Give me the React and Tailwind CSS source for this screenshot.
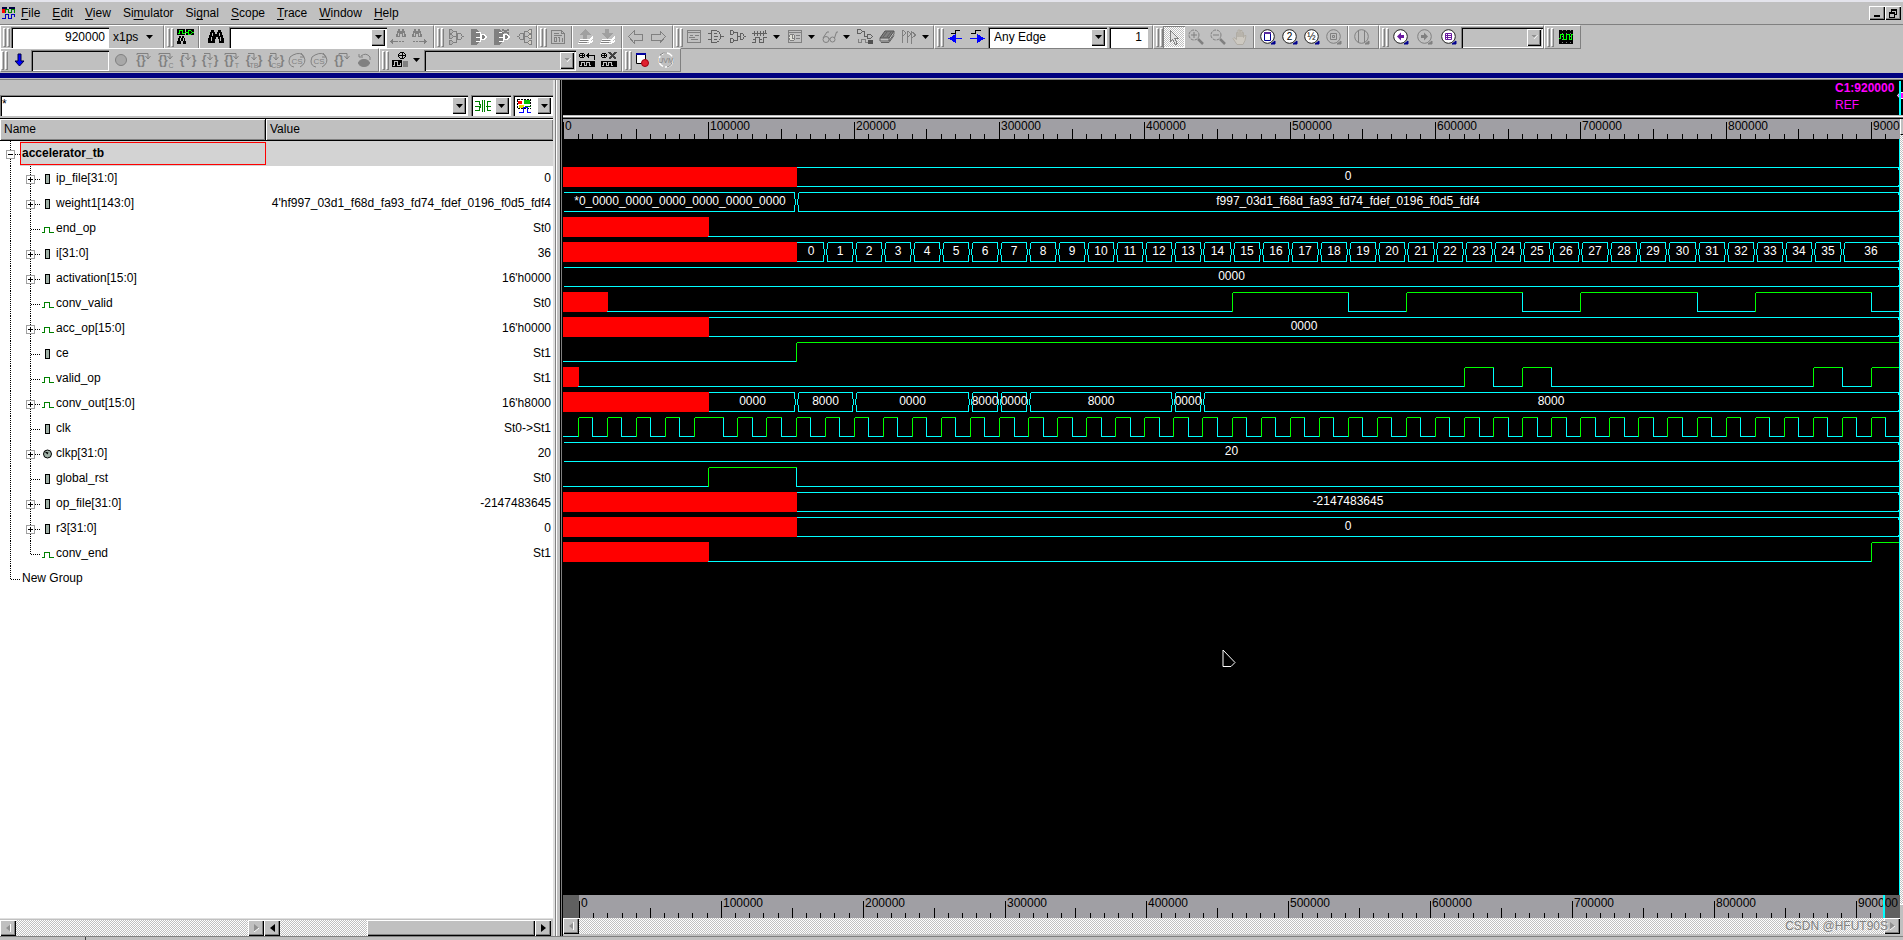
import React, { useLayoutEffect, useRef, useState } from "react";

const END = 920000;
const G = "#808080";

const RAISED = "bg-[#c0c0c0] shadow-[inset_1px_1px_#fff,inset_-1px_-1px_#000,inset_-2px_-2px_#808080]";
const SUNKEN = "shadow-[inset_1px_1px_#808080,inset_2px_2px_#000,inset_-1px_-1px_#fff]";
const DITHER = "bg-[repeating-conic-gradient(#c0c0c0_0%_25%,#ffffff_0%_50%)] bg-[length:2px_2px]";

/* ---------- icons ---------- */

function Ico({ children, w = 16, h = 16, smooth, color = G }) {
  return (
    <svg width={w} height={h} viewBox={`0 0 ${w} ${h}`} fill="none" stroke={color} className="shrink-0" shapeRendering={smooth ? "auto" : "crispEdges"} aria-hidden="true">
      {children}
    </svg>
  );
}

const AppIcon = () => (
  <Ico w={14} h={14}>
    <path d="M0 1.5h5M7 1.5h6" stroke="#000040" strokeWidth="2" />
    <path d="M1 3v4" stroke="#f00" strokeWidth="3" />
    <path d="M3.500 7V3.500h3v3h3v-3h3V7" stroke="#008000" />
    <path d="M0 12.500h3.500v-4h3v4h3v-4h3v2" stroke="#0000c0" />
  </Ico>
);
const FindSignal = () => (
  <Ico w={17}>
    <path d="M0 0h8v6H0zM9 0h8v6H9z" fill="#000" stroke="none" />
    <path d="M1 4.500h1.500v-3h3v3h2M8 3.500h3M11.500 1.500h2l2 2-2 2h-2zM15 3.500h2" stroke="#0f0" />
    <path d="M2 7h2v2h1v-2h2v2h1v3h1v3H6v-3H4v3H0v-3h1v-3h1z" fill="#000" stroke="none" />
    <path d="M3.500 9v3M6.500 9v3" stroke="#c0c0c0" />
  </Ico>
);
const Bino = () => (
  <Ico>
    <path d="M3 1h3v2h1v2h2v-2h1v-2h3v2h1v3h1v3h1v5h-5v-4h-1v-2h-2v2h-1v4H0V9h1V6h1V3h1z" fill="#000" stroke="none" />
    <path d="M4.500 4v3M3.500 8v4M11.500 4v3M12.500 8v4" stroke="#c0c0c0" />
  </Ico>
);
const BinoDir = ({ right }) => (
  <Ico>
    <g transform={right ? undefined : "translate(6 0)"}>
      <path d="M2 0h2v2h2V0h2v2h1v3h1v3H6V5H4v3H0V5h1V2h1z" fill={G} stroke="none" />
      <path d="M2.500 4v3M7.500 4v3" stroke="#c0c0c0" />
    </g>
    {right ? <path d="M1 12.500h2M4 12.500h2M7 12.500h8M13.500 11v3M12.500 10v5" /> : <path d="M0 12.500h8M9 12.500h2M12 12.500h2M1.500 11v3M2.500 10v5" />}
  </Ico>
);
const Fan = ({ dark, cross, flip }) => (
  <Ico>
    <g transform={flip ? "translate(16 0) scale(-1 1)" : undefined}>
      {dark ? (
        <>
          <path d="M0 0h5l3 3v3l-2 2 2 2v3l-3 3H0z" fill={G} stroke="none" />
          <path d="M5 3.500h4v9H5M5 8h4M10 5.500h3l2 2v1l-2 2h-3z" stroke="#fff" fill={G} />
        </>
      ) : (
        <>
          <path d="M1.500.5h2l2 2-2 2h-2zM1.500 5.500h2l2 2-2 2h-2zM1.500 11.500h2l2 2-2 2h-2z" fill={flip ? "#d4d0c8" : "#b0b0b0"} />
          <path d="M6 2.500h2.500v11H6M6 7.500h3" />
          <path d="M9.500 4.500h3l2 3-2 3h-3zM15 7.500h1" />
        </>
      )}
      {cross && <path d="M8 0l7 5M15 0l-7 5" stroke={G} strokeWidth="2" />}
    </g>
  </Ico>
);
const Doc = () => (
  <Ico>
    <path d="M1.500 1.500h10l3 3v10h-13zM11.500 1.500v3h3" />
    <path d="M4 4.500h5M4 6.500h8M4.500 8.500h2v4h-2zM9.500 8v5M8 8.500h2M12 8.500v4" />
  </Ico>
);
const Stack = ({ down }) => (
  <Ico w={18}>
    <path d={down ? "M6 0h4v4h4l-6 6-6-6h4z" : "M8 0l6 6h-4v4H6V6H2z"} fill="#a0a0a0" stroke="none" />
    <path d="M3 10.500h10l3-3M2 12.500h10l4-3M1 14.500h10l5-3" stroke="#fff" />
    <path d="M3 11.500h8M2 13.500h8" stroke={G} />
    <path d="M12 14.500l4-2" stroke="#fff" />
  </Ico>
);
const Nav = ({ right }) => (
  <Ico>
    <path transform={right ? "translate(16 0) scale(-1 1)" : undefined} d="M.5 7.500l5.500-5.500v3h8.500v6H6v3z" />
  </Ico>
);
const Form = () => (
  <Ico>
    <path d="M1.500 1.500h13v12h-13zM1.500 3.500h13" />
    <path d="M4 6.500h3M9 6.500h4M3 8.500h6M5 10.500h7" />
  </Ico>
);
const Gate = () => (
  <Ico color="#606060">
    <path d="M3.500 1.500h5l3 2 1.500 4-1.500 4-3 2h-5zM0 4.500h3M0 10.500h3M13 7.500h3M6 4.500h3M6 7.500h4M6 10.500h3" />
  </Ico>
);
const Tree = () => (
  <Ico color="#606060">
    <path d="M.5 1.500h2l1.500 2-1.500 2h-2zM.5 9.500h2l1.500 2-1.500 2h-2zM10.500 4.500h2l2 3-2 3h-2z" />
    <path d="M4 3.500h3.500v8H4M7 7.500h3M14 7.500h2" />
  </Ico>
);
const WaveIco = () => (
  <Ico color="#606060">
    <path d="M0 4.500h15M2.500 2v5M5.500 2v5M8.500 2v5M11.500 2v5M13.500 1v4" />
    <path d="M0 13.500h3.500v-5h4v5h4v-5h3M1 10.500h2M8 10.500h2" />
  </Ico>
);
const ClockPanel = () => (
  <Ico>
    <path d="M1.500 1.500h13v12h-13zM2 3.500h12" />
    <circle cx="5" cy="8.500" r="3" fill="#e0e0d8" stroke={G} />
    <path d="M5.500 6v3h2M9 6.500h4M9 9.500h4" />
  </Ico>
);
const Glasses = () => (
  <Ico smooth>
    <circle cx="4" cy="10.500" r="3" />
    <circle cx="10.500" cy="10.500" r="2.500" />
    <path d="M1 9l4-6h2M12.500 9l2-6h1.500M7 10h1" />
  </Ico>
);
const GateWave = () => (
  <Ico color="#606060">
    <path d="M.5.5h3l2 2-2 2h-3zM10.500 5.500h3l2 2-2 2h-3zM5 2.500h2.500v5H10" />
    <path d="M1 10v3.500h3v-3h4v3h3" stroke={G} />
    <path d="M11 11h5v4h-5z" fill="#505050" stroke="none" />
  </Ico>
);
const Chip = () => (
  <Ico smooth>
    <path d="M1 9L6 2h9l-5 7z" fill="#808080" stroke="#505050" />
    <path d="M1 9v3h9V9M10 12l5-7V2M2 13.500h8l5-7M8 3l-4 5M12 3l-4 5" stroke="#606060" />
  </Ico>
);
const Flags = () => (
  <Ico>
    <path d="M1.500 1v13M2 1l3 3-3 3M6.500 2v12M7 2l3 3-3 3M10.500 2v13M11 3l4 3-4 3" />
  </Ico>
);
const EdgeIco = ({ right }) => (
  <Ico>
    <path d={right ? "M2 4.500h4.500v-3.500h5" : "M4 4.500h4.500v-3.500h4"} stroke="#000" />
    <path d={right ? "M1 9.500h7" : "M8 9.500h7"} stroke="#00f" />
    <path d={right ? "M8 5l8 4.500-8 4.500z" : "M9 5L1 9.500l8 4.500z"} fill="#00f" stroke="none" />
  </Ico>
);
const Pointer = () => (
  <Ico>
    <path d="M4.500 1.500l8 8h-4l3 5-2 1-3-5-2 2z" fill="#e0e0e0" />
  </Ico>
);
const Mag = ({ plus }) => (
  <Ico smooth>
    <circle cx="6" cy="6" r="5" strokeDasharray="3 1" />
    <path d="M3 6h6" />
    {plus && <path d="M6 3v6" />}
    <path d="M10 10l5 5" strokeWidth="2.500" />
  </Ico>
);
const Hand = () => (
  <Ico smooth>
    <path d="M5 15.500L1 9.500l1-1 2.500 2V3.500h1.500V8V1h2v7V1.500h2V8V3.500h1.500v5l1-2h1.500l-1 5-2 4z" fill="#cdc9c1" stroke="#b0aca4" />
  </Ico>
);
function Lens({ disabled, children }) {
  return (
    <Ico smooth>
      <circle cx="7.500" cy="7.500" r="6.800" fill={disabled ? "none" : "#fff"} stroke={disabled ? G : "#202020"} />
      <path d="M15 12v3h-4z" fill={disabled ? G : "#000090"} stroke={disabled ? G : "#000090"} />
      {children}
    </Ico>
  );
}
const LensFit = () => (
  <Lens>
    <path d="M4.500 3.500h6v8h-6z" stroke="#000090" />
    <path d="M4 4h7" stroke="#5b2ca0" strokeWidth="2" />
  </Lens>
);
const LensText = ({ t }) => (
  <Lens>
    <text x="7.500" y="11" textAnchor="middle" className="font-['Liberation_Sans',sans-serif] text-[10px]" fill="#000" stroke="none">{t}</text>
  </Lens>
);
const LensSel = () => (
  <Lens disabled>
    <path d="M4.500 4.500h6v6h-6z" />
    <path d="M6.500 6.500h2v2h-2z" />
  </Lens>
);
const LensPan = () => (
  <Lens disabled>
    <path d="M4.500 1.500v12M10.500 1.500v12" />
  </Lens>
);
const LensArrow = ({ right }) => (
  <Lens disabled={right}>
    <path d={right ? "M4 6h3V3.500l4 4-4 4V9H4z" : "M11 6H8V3.500l-4 4 4 4V9h3z"} fill={right ? G : "#6a1aa0"} stroke="none" />
  </Lens>
);
const LensList = () => (
  <Lens>
    <path d="M4.500 4.500h6v6h-6zM4 6.500h7M4 8.500h7M6.500 4v7" stroke="#6a1aa0" />
  </Lens>
);
const GreenWave = () => (
  <Ico>
    <path d="M1 1h14v14H1z" fill="#000" stroke="none" />
    <path d="M4.500 1v14M8.500 1v14M12.500 1v14" stroke="#808080" strokeDasharray="1 2" />
    <path d="M1 9.500h1.500v-4h3v5h3v-5h3v5h2v-5h1" stroke="#0f0" />
  </Ico>
);
const DownArrow = () => (
  <Ico smooth>
    <path d="M7 2h3v7h3l-4.500 5L4 9h3z" fill="#00f" stroke="#000040" />
  </Ico>
);
const Dot = () => (
  <Ico smooth>
    <circle cx="8" cy="8" r="5.500" fill="#a8a8a8" stroke={G} />
  </Ico>
);
function Brace({ x, children }) {
  return (
    <text x={x} y="12" textAnchor="middle" className="font-['Liberation_Sans',sans-serif] text-[12px] font-bold" fill={G} stroke="none">
      {children}
    </text>
  );
}
function Step({ mode, sub }) {
  return (
    <svg width="20" height="17" viewBox="0 0 20 17" fill="none" stroke={G} className="shrink-0" aria-hidden="true">
      {mode === "over" && <Brace x={7}>{"{}"}</Brace>}
      {mode === "over" && <path d="M3 3V1.500h11v5M11.500 4l2.500 3 2.500-3" />}
      {mode === "into" && (
        <>
          <Brace x={4}>{"{"}</Brace>
          <Brace x={16}>{"}"}</Brace>
          <path d="M4 1.500h6v6M7.500 5l2.500 3 2.500-3" />
        </>
      )}
      {mode === "out" && <Brace x={7}>{"{}"}</Brace>}
      {mode === "out" && <path d="M7 4V1.500h8v5M12.500 4l2.500 3 2.500-3" />}
      {mode === "loop" && (
        <>
          <text x="9" y="12" textAnchor="middle" className="font-['Liberation_Sans',sans-serif] text-[8px]" fill={G} stroke="none">CS</text>
          <path d="M5 3q-4 1-4 6t5 6M5 3q8-4 11 2t-4 10M13 1l3 4h-4" />
        </>
      )}
      {sub && <text x={mode === "over" ? 15 : 10} y="16" textAnchor="middle" className="font-['Liberation_Sans',sans-serif] text-[7px]" fill={G} stroke="none">{sub}</text>}
    </svg>
  );
}
const Reload = () => (
  <Ico smooth>
    <ellipse cx="8" cy="11" rx="5.500" ry="3.500" fill={G} />
    <path d="M5 4q5-4 9 1v3M3 2v3h4" />
  </Ico>
);
const Target = () => (
  <Ico color="#000">
    <path d="M0 8h10v7H0z" fill="#000" stroke="none" />
    <path d="M1 13.500h1.500v-4h3v4h3v-3" stroke="#c0c0c0" />
    <path d="M11 9h5v6h-5z" fill={G} stroke="none" />
    <path d="M8.500.5h3l2 2v2l-2 2h-3l-2-2v-2zM10 0v7M6 3.500h8" />
  </Ico>
);
const TargetWave = ({ cross }) => (
  <Ico color="#000">
    <path d="M0 9h16v6H0z" fill="#000" stroke="none" />
    <path d="M1 13.500h1.500v-3h3v3h2v-3h3v3h1" stroke="#c0c0c0" />
    <path d="M1.500 1.500h3l1 1v2l-1 1h-3l-1-1v-2zM3.500 1v5M0 3.500h6" />
    {cross ? <path d="M8 0l7 7M15 0L8 7" stroke="#404040" strokeWidth="2" /> : <path d="M7 3.500h8.500v4M9.500 1v5M8.500 2v3" />}
  </Ico>
);
const RecordWin = () => (
  <Ico smooth>
    <path d="M1.500 1.500h9v10h-9z" fill="#fff" stroke="#000" />
    <path d="M1 2h10" stroke="#0000a0" strokeWidth="2" />
    <circle cx="10" cy="11" r="3.500" fill="#e02030" stroke="#a00010" />
  </Ico>
);
const Uvm = () => (
  <Ico smooth color="#fff">
    <circle cx="8" cy="8" r="7" strokeWidth="1.500" strokeDasharray="12 2" />
    <path d="M2 3q3-3 7-2M9 15q4-1 5-4" stroke={G} />
    <text x="8" y="11" textAnchor="middle" className="font-['Liberation_Sans',sans-serif] text-[7px]" fill={G} stroke="none">UVM</text>
  </Ico>
);
const FilterA = () => (
  <Ico color="#008000">
    <path d="M0 3.500h4v3M0 12.500h4v-3M0 8h5M16 3.500h-4v9h4M11 8h5M7.500 2v12M9.500 2v12M4 5l2 3-2 3" />
  </Ico>
);
const FilterB = () => (
  <Ico color="#008000">
    <path d="M.5 1.500h13v9H.5z" stroke="#000" strokeDasharray="2 1" />
    <path d="M1 3h4v3H1z" fill="#f00" stroke="none" />
    <path d="M7 2h6v4H7z" fill="#00c000" stroke="none" />
    <path d="M2 7h5v3H2z" fill="#e0e000" stroke="none" />
    <path d="M2 14.500h4v-5h4v5h4" stroke="#00f" />
    <path d="M8 8.500h6" />
  </Ico>
);

function Tri({ dim }) {
  return (
    <svg width="7" height="4" viewBox="0 0 7 4" className="shrink-0" aria-hidden="true">
      <path d="M0 0h7L3.500 4z" fill={dim ? "#fff" : "#000"} />
      {dim && <path d="M0 0h6L3 3z" fill="#909090" />}
    </svg>
  );
}
function SideTri({ right, dim }) {
  return (
    <svg width="5" height="8" viewBox="0 0 5 8" aria-hidden="true">
      <path d={right ? "M0 0l5 4-5 4z" : "M5 0L0 4l5 4z"} fill={dim ? "#909090" : "#000"} />
      {dim && <path d={right ? "M5 4L0 8" : "M4.500 0v8"} stroke="#fff" />}
    </svg>
  );
}

/* ---------- toolbar parts ---------- */

function Grip({ m = "ml-0.5" }) {
  return (
    <span className={`flex shrink-0 gap-px ${m}`}>
      <span className="h-[19px] w-[3px] border border-t-white border-r-[#808080] border-b-[#808080] border-l-white" />
      <span className="h-[19px] w-[3px] border border-t-white border-r-[#808080] border-b-[#808080] border-l-white" />
    </span>
  );
}
function Sep() {
  return <span className="mx-0.5 h-full w-0.5 shrink-0 border-r border-l border-r-white border-l-[#808080]" />;
}
function Group({ w, children }) {
  return <div className={`flex h-6 shrink-0 items-center border-t border-r border-b border-l border-t-white border-r-[#808080] border-b-[#808080] border-l-white ${w}`}>{children}</div>;
}
function Tool({ label, w = "w-[22px]", pressed, children }) {
  return (
    <button type="button" aria-label={label} className={`flex h-[22px] shrink-0 items-center justify-center ${w} ${pressed ? DITHER + " shadow-[inset_1px_1px_#808080,inset_-1px_-1px_#fff]" : ""}`}>
      {children}
    </button>
  );
}
function Drop({ label }) {
  return (
    <button type="button" aria-label={label} className="flex h-[22px] w-[13px] shrink-0 items-center pl-0.5">
      <Tri />
    </button>
  );
}
function Combo({ label, w, value = "", dim, icon, editable }) {
  const field = `h-full w-full appearance-none border-0 bg-transparent py-0 pr-4 pl-1.5 outline-none ${icon ? "text-transparent" : ""}`;
  return (
    <span className={`relative flex h-[21px] ${w} ${dim ? "bg-[#c0c0c0]" : "bg-white"} ${SUNKEN}`}>
      {editable ? (
        <input aria-label={label} defaultValue={value} className="h-full w-full border-0 bg-transparent pr-4 pb-1 pl-0.5 outline-none" />
      ) : (
        <select aria-label={label} defaultValue={value} disabled={dim} className={field}>
          <option>{value}</option>
        </select>
      )}
      {icon && <span className="pointer-events-none absolute inset-y-0 left-1 flex items-center">{icon}</span>}
      <span className={`pointer-events-none absolute inset-y-0.5 right-0.5 flex w-[14px] items-center justify-center ${RAISED}`}>
        <Tri dim={dim} />
      </span>
    </span>
  );
}

function Menu({ pre = "", k, post }) {
  return (
    <button type="button" className="h-[22px]">
      {pre}
      <span className="underline underline-offset-2">{k}</span>
      {post}
    </button>
  );
}

function MenuBar() {
  return (
    <header className="flex h-[22px] shrink-0 items-center pl-0.5">
      <AppIcon />
      <nav className="ml-[5px] flex gap-3" aria-label="Main menu">
        <Menu k="F" post="ile" />
        <Menu k="E" post="dit" />
        <Menu k="V" post="iew" />
        <Menu pre="Si" k="m" post="ulator" />
        <Menu pre="Si" k="g" post="nal" />
        <Menu k="S" post="cope" />
        <Menu k="T" post="race" />
        <Menu k="W" post="indow" />
        <Menu k="H" post="elp" />
      </nav>
      <div className="mr-0.5 ml-auto flex">
        <button type="button" aria-label="Minimize" className={`flex h-[14px] w-4 items-end justify-center pb-[3px] ${RAISED}`}>
          <span className="h-0.5 w-1.5 bg-black" />
        </button>
        <button type="button" aria-label="Restore" className={`flex h-[14px] w-4 items-center justify-center ${RAISED}`}>
          <Ico w={9} h={9} color="#000">
            <path d="M2.500 2.500V.5h5v5h-2M2 1.500h6M.5 3.500h5v5h-5zM0 4.500h6" />
          </Ico>
        </button>
      </div>
    </header>
  );
}

function ToolbarOne() {
  return (
    <div className="flex h-6 shrink-0 border-t border-[#808080]">
      <Group w="w-[164px]">
        <Grip />
        <input aria-label="Cursor time" defaultValue="920000" className={`ml-px h-[21px] w-[98px] bg-white pr-1 text-right outline-none ${SUNKEN}`} />
        <button type="button" className="flex h-[22px] items-center gap-2 pl-1">
          x1ps <Tri />
        </button>
      </Group>
      <Group w="w-[270px]">
        <Grip />
        <Tool label="Find signal"><FindSignal /></Tool>
        <Sep />
        <Tool label="Find" w="w-[27px]"><Bino /></Tool>
        <Combo label="Search text" w="w-[158px]" />
        <Tool label="Search backward"><BinoDir /></Tool>
        <Tool label="Search forward"><BinoDir right /></Tool>
      </Group>
      <Group w="w-[103px]">
        <Grip />
        <Tool label="Drivers" w="w-[23px]"><Fan /></Tool>
        <Tool label="Loads" w="w-[23px]"><Fan dark /></Tool>
        <Tool label="Clear trace" w="w-[23px]"><Fan dark cross /></Tool>
        <Tool label="Connectivity" w="w-[23px]"><Fan flip /></Tool>
      </Group>
      <Group w="w-[136px]">
        <Grip />
        <Tool label="Report"><Doc /></Tool>
        <Sep />
        <Tool label="Move up"><Stack /></Tool>
        <Tool label="Move down"><Stack down /></Tool>
        <Sep />
        <Tool label="Back"><Nav /></Tool>
        <Tool label="Forward"><Nav right /></Tool>
      </Group>
      <Group w="w-[261px]">
        <Grip />
        <Tool label="Source"><Form /></Tool>
        <Tool label="Schematic"><Gate /></Tool>
        <Tool label="Path schematic"><Tree /></Tool>
        <Tool label="Waveform"><WaveIco /></Tool>
        <Drop label="Waveform options" />
        <Tool label="List view"><ClockPanel /></Tool>
        <Drop label="List options" />
        <Tool label="Watch"><Glasses /></Tool>
        <Drop label="Watch options" />
        <Tool label="Compare"><GateWave /></Tool>
        <Tool label="Memory"><Chip /></Tool>
        <Tool label="Assertions"><Flags /></Tool>
        <Drop label="Assertion options" />
      </Group>
      <Group w="w-[219px]">
        <Grip />
        <Tool label="Previous edge"><EdgeIco /></Tool>
        <Tool label="Next edge"><EdgeIco right /></Tool>
        <Combo label="Edge type" w="w-[119px]" value="Any Edge" />
        <input aria-label="Edge count" defaultValue="1" className={`ml-0.5 h-[21px] w-[39px] bg-white pr-1.5 text-right outline-none ${SUNKEN}`} />
      </Group>
      <Group w="w-[226px]">
        <Grip />
        <Tool label="Select" pressed><Pointer /></Tool>
        <Tool label="Zoom in"><Mag plus /></Tool>
        <Tool label="Zoom out"><Mag /></Tool>
        <Tool label="Pan"><Hand /></Tool>
        <Sep />
        <Tool label="Zoom full"><LensFit /></Tool>
        <Tool label="Zoom 2x"><LensText t="2" /></Tool>
        <Tool label="Zoom half"><LensText t="½" /></Tool>
        <Tool label="Zoom selection"><LensSel /></Tool>
        <Sep />
        <Tool label="Zoom cursors"><LensPan /></Tool>
      </Group>
      <Group w="w-[165px]">
        <Grip />
        <Tool label="Previous zoom" w="w-6"><LensArrow /></Tool>
        <Tool label="Next zoom" w="w-6"><LensArrow right /></Tool>
        <Tool label="Zoom list" w="w-6"><LensList /></Tool>
        <Combo label="Zoom history" w="w-[82px]" dim />
      </Group>
      <Group w="w-[37px]">
        <Grip />
        <Tool label="Wave display" w="w-6"><GreenWave /></Tool>
      </Group>
    </div>
  );
}

function ToolbarTwo() {
  return (
    <div className="flex h-6 shrink-0">
      <Group w="w-[379px]">
        <Grip m="ml-0" />
        <Tool label="Run"><DownArrow /></Tool>
        <input aria-label="Run length" disabled className={`ml-px h-[21px] w-[78px] bg-[#c0c0c0] outline-none ${SUNKEN}`} />
        <Tool label="Stop" w="w-6"><Dot /></Tool>
        <Tool label="Step over"><Step mode="over" /></Tool>
        <Tool label="Step over constraint"><Step mode="over" sub="C" /></Tool>
        <Tool label="Step into"><Step mode="into" /></Tool>
        <Tool label="Step into thread"><Step mode="into" sub="T" /></Tool>
        <Tool label="Step over thread"><Step mode="over" sub="T" /></Tool>
        <Tool label="Step into testbench"><Step mode="into" sub="TB" /></Tool>
        <Tool label="Step into solver"><Step mode="into" sub="CS" /></Tool>
        <Tool label="Loop solver"><Step mode="loop" /></Tool>
        <Tool label="Rerun solver"><Step mode="loop" /></Tool>
        <Tool label="Step out"><Step mode="out" /></Tool>
        <Tool label="Restart"><Reload /></Tool>
      </Group>
      <Group w="w-[243px]">
        <Grip />
        <Tool label="Set marker"><Target /></Tool>
        <Drop label="Marker options" />
        <Combo label="Marker" w="w-[152px]" dim />
        <Tool label="Go to marker"><TargetWave /></Tool>
        <Tool label="Delete marker"><TargetWave cross /></Tool>
      </Group>
      <Group w="w-[59px]">
        <Grip />
        <Tool label="Record"><RecordWin /></Tool>
        <Tool label="UVM" w="w-6"><Uvm /></Tool>
      </Group>
    </div>
  );
}

/* ---------- signals ---------- */

const iSegs = [[0, 160000, "x"]];
for (let n = 0; n <= 36; n++) iSegs.push([160000 + n * 20000, n === 36 ? END : 180000 + n * 20000, String(n)]);

const clkSegs = [[0, 10000, "0"]];
for (let t = 10000; t < 90000; t += 20000) clkSegs.push([t, t + 10000, "1"], [t + 10000, t + 20000, "0"]);
clkSegs.push([90000, 110000, "1"], [110000, 120000, "0"]);
for (let t = 120000; t < 900000; t += 20000) clkSegs.push([t, t + 10000, "1"], [t + 10000, t + 20000, "0"]);
clkSegs.push([900000, 910000, "1"], [910000, END, "0"]);

function pulses(from, lead, highs) {
  const out = lead ? [[0, from, lead]] : [];
  let t = from;
  highs.forEach(([a, b]) => {
    if (a > t) out.push([t, a, "0"]);
    out.push([a, b, "1"]);
    t = b;
  });
  if (t < END) out.push([t, END, "0"]);
  return out;
}

const SIGNALS = [
  { name: "ip_file[31:0]", value: "0", icon: "reg", exp: true, bus: true, segs: [[0, 160000, "x"], [160000, END, "0"]] },
  { name: "weight1[143:0]", value: "4'hf997_03d1_f68d_fa93_fd74_fdef_0196_f0d5_fdf4", icon: "reg", exp: true, bus: true, segs: [[0, 160000, "*0_0000_0000_0000_0000_0000_0000"], [160000, END, "f997_03d1_f68d_fa93_fd74_fdef_0196_f0d5_fdf4"]] },
  { name: "end_op", value: "St0", icon: "net", segs: pulses(100000, "x", []) },
  { name: "i[31:0]", value: "36", icon: "reg", exp: true, bus: true, segs: iSegs },
  { name: "activation[15:0]", value: "16'h0000", icon: "reg", exp: true, bus: true, segs: [[0, END, "0000"]] },
  { name: "conv_valid", value: "St0", icon: "net", segs: pulses(30000, "x", [[460000, 540000], [580000, 660000], [700000, 780000], [820000, 900000]]) },
  { name: "acc_op[15:0]", value: "16'h0000", icon: "net", exp: true, bus: true, segs: [[0, 100000, "x"], [100000, END, "0000"]] },
  { name: "ce", value: "St1", icon: "reg", segs: pulses(0, null, [[160000, END]]) },
  { name: "valid_op", value: "St1", icon: "net", segs: pulses(10000, "x", [[620000, 640000], [660000, 680000], [860000, 880000], [900000, END]]) },
  { name: "conv_out[15:0]", value: "16'h8000", icon: "net", exp: true, bus: true, segs: [[0, 100000, "x"], [100000, 160000, "0000"], [160000, 200000, "8000"], [200000, 280000, "0000"], [280000, 300000, "8000"], [300000, 320000, "0000"], [320000, 420000, "8000"], [420000, 440000, "0000"], [440000, END, "8000"]] },
  { name: "clk", value: "St0->St1", icon: "reg", segs: clkSegs },
  { name: "clkp[31:0]", value: "20", icon: "param", exp: true, bus: true, segs: [[0, END, "20"]] },
  { name: "global_rst", value: "St0", icon: "reg", segs: pulses(0, null, [[100000, 160000]]) },
  { name: "op_file[31:0]", value: "-2147483645", icon: "reg", exp: true, bus: true, segs: [[0, 160000, "x"], [160000, END, "-2147483645"]] },
  { name: "r3[31:0]", value: "0", icon: "reg", exp: true, bus: true, segs: [[0, 160000, "x"], [160000, END, "0"]] },
  { name: "conv_end", value: "St1", icon: "net", segs: pulses(100000, "x", [[900000, END]]) },
];

function Branch({ sig, last }) {
  return (
    <svg width="56" height="25" viewBox="0 0 56 25" className="shrink-0" shapeRendering="crispEdges" fill="none" stroke="#000" aria-hidden="true">
      <path d={last ? "M10.500 0v25M30.500 0v14" : "M10.500 0v25M30.500 0v25"} strokeDasharray="1 1" />
      <path d="M31 13.500h9" strokeDasharray="1 1" />
      {sig.exp && (
        <>
          <path d="M26.500 9.500h8v8h-8z" fill="#fff" stroke="#a0a0a0" />
          <path d="M28 13.500h5M30.500 11v5" />
        </>
      )}
      {sig.icon === "reg" && <path d="M45.500 8.500h4v9h-4z" fill="#9fb0a6" />}
      {sig.icon === "net" && <path d="M42 16.500h2.500v-5h5v5h4.500" stroke="#008000" />}
      {sig.icon === "param" && (
        <g shapeRendering="auto">
          <circle cx="47.500" cy="13" r="4" fill="#9fb0a6" />
          <path d="M44.500 10.500l3 3 1-2z" fill="#000" stroke="none" />
        </g>
      )}
    </svg>
  );
}

function SignalTable() {
  const th = "relative h-[23px] border-b border-b-black pl-1 text-left font-normal bg-[#c0c0c0] shadow-[inset_0_1px_#000,inset_1px_2px_#fff,inset_-1px_-1px_#808080]";
  return (
    <table className="w-full table-fixed border-separate border-spacing-0">
      <colgroup>
        <col className="w-[266px]" />
        <col />
      </colgroup>
      <thead>
        <tr>
          <th scope="col" className={`${th} border-r border-r-black`}>Name</th>
          <th scope="col" className={th}>Value</th>
        </tr>
      </thead>
      <tbody>
        <tr>
          <td className="h-[25px] p-0">
            <div className="flex h-[25px]">
              <svg width="20" height="25" viewBox="0 0 20 25" className="shrink-0" shapeRendering="crispEdges" fill="none" stroke="#000" aria-hidden="true">
                <path d="M10.500 0v25M15 13.500h5" strokeDasharray="1 1" />
                <path d="M6.500 9.500h8v8h-8z" fill="#fff" stroke="#a0a0a0" />
                <path d="M8 13.500h5" />
              </svg>
              <span className="flex flex-1 bg-[#d3d3d3] py-px">
                <span className="flex flex-1 items-center border border-[#f00] pb-0.5 pl-px font-bold">accelerator_tb</span>
              </span>
            </div>
          </td>
          <td className="bg-[#d3d3d3] p-0" />
        </tr>
        {SIGNALS.map((s, n) => (
          <tr key={s.name}>
            <td className="h-[25px] p-0">
              <div className="flex h-[25px]">
                <Branch sig={s} last={n === SIGNALS.length - 1} />
                <span className="leading-6">{s.name}</span>
              </div>
            </td>
            <td className="h-[25px] p-0">
              <div className="flex h-[25px] justify-end overflow-hidden pr-0.5 leading-6 whitespace-nowrap">{s.value}</div>
            </td>
          </tr>
        ))}
        <tr>
          <td className="h-[25px] p-0">
            <div className="flex h-[25px]">
              <svg width="22" height="25" viewBox="0 0 22 25" className="shrink-0" shapeRendering="crispEdges" fill="none" stroke="#000" aria-hidden="true">
                <path d="M10.500 0v14M11 13.500h9" strokeDasharray="1 1" />
              </svg>
              <span className="leading-6">New Group</span>
            </div>
          </td>
          <td className="p-0" />
        </tr>
      </tbody>
    </table>
  );
}

function ScrollBtn({ right, dim, label }) {
  return (
    <button type="button" aria-label={label} className={`flex h-full w-4 shrink-0 items-center justify-center ${RAISED}`}>
      <SideTri right={right} dim={dim} />
    </button>
  );
}

function SignalPane() {
  return (
    <section className="flex w-[553px] shrink-0 flex-col" aria-label="Signals">
      <div className="h-[15px] shrink-0" />
      <div className="flex h-[23px] shrink-0 items-start justify-between">
        <Combo label="Signal filter" w="w-[468px]" value="*" editable />
        <Combo label="Filter type" w="w-10" icon={<FilterA />} />
        <Combo label="Filter scope" w="w-10" icon={<FilterB />} />
      </div>
      <div className="flex min-h-0 flex-1 flex-col overflow-hidden border-b border-[#e0e0e0] bg-white">
        <SignalTable />
      </div>
      <div className="mt-px flex h-4 shrink-0 pr-0.5">
        <div className={`flex w-[264px] ${DITHER}`}>
          <ScrollBtn dim label="Scroll names left" />
          <span className="flex-1" />
          <ScrollBtn right dim label="Scroll names right" />
        </div>
        <div className={`flex flex-1 ${DITHER}`}>
          <ScrollBtn label="Scroll values left" />
          <span className="flex-1" />
          <span className={`w-[168px] ${RAISED}`} />
          <ScrollBtn right label="Scroll values right" />
        </div>
      </div>
    </section>
  );
}

/* ---------- waveforms ---------- */

function useWidth() {
  const ref = useRef(null);
  const [w, setW] = useState(0);
  useLayoutEffect(() => {
    const measure = () => setW(ref.current.clientWidth);
    measure();
    const ro = new ResizeObserver(measure);
    ro.observe(ref.current);
    return () => ro.disconnect();
  }, []);
  return [ref, w];
}

function Ruler({ width, height }) {
  const ticks = [];
  for (let t = 0; t < END; t += 10000) {
    const x = Math.round((t / END) * width) + 0.5;
    const len = t % 100000 === 0 ? 17 : t % 50000 === 0 ? 10 : 5;
    ticks.push(`M${x} ${height - len}V${height}`);
  }
  const base = height === 20 ? 11 : 12;
  return (
    <svg width={width} height={height} className="block overflow-visible" shapeRendering="crispEdges" aria-label="Time ruler">
      <path d={ticks.join("")} stroke="#000" />
      {Array.from({ length: 10 }, (_, n) => (
        <text key={n} x={Math.round(((n * 100000) / END) * width) + 2} y={base} fill="#000">
          {n * 100000}
        </text>
      ))}
    </svg>
  );
}

function Wave({ sig, top, width }) {
  const X = (t) => Math.min(Math.round((t / END) * width), width - 1) + 0.5;
  const hi = top + 0.5;
  const lo = top + 19.5;
  const mid = top + 10;
  const cyan = [];
  const green = [];
  const red = [];
  const labels = [];
  sig.segs.forEach(([a, b, v], n) => {
    const xa = X(a);
    const xb = X(b);
    const prev = n ? sig.segs[n - 1][2] : null;
    if (v === "x") {
      red.push(<rect key={n} x="0" y={top} width={xb + 0.5} height="20" fill="#f00" />);
      return;
    }
    if (sig.bus) {
      const open = prev === null || prev === "x";
      const l = open ? xa : xa + 2;
      const r = b === END ? xb - 1 : xb - 2;
      cyan.push(`M${l} ${hi}H${r}v2M${l} ${lo}H${r}v-2`);
      if (!open) cyan.push(`M${l} ${hi}v3L${xa + 1} ${mid}L${l} ${lo - 3}v3`);
      if (b !== END) cyan.push(`M${r} ${hi}v3L${xb - 1} ${mid}L${r} ${lo - 3}v3`);
      labels.push(<text key={n} x={(xa + xb) / 2} y={top + 13} textAnchor="middle" fill="#fff">{v}</text>);
      return;
    }
    if (v === "1") {
      if (prev === "0") green.push(`M${xa} ${lo + 0.5}V${hi}`);
      green.push(`M${xa} ${hi}H${xb}`);
    } else {
      if (prev === "1") cyan.push(`M${xa} ${hi - 0.5}V${lo}`);
      cyan.push(`M${xa - 0.5} ${lo}H${xb}`);
    }
  });
  return (
    <g>
      {red}
      <path d={cyan.join("")} stroke="#0ff" fill="none" />
      <path d={green.join("")} stroke="#0f0" fill="none" />
      {labels}
    </g>
  );
}

function WavePane() {
  const [ref, w] = useWidth();
  return (
    <section className="flex min-w-0 flex-1 flex-col bg-black" aria-label="Waveforms">
      <div className="relative h-[35px] shrink-0 text-[#ff00ff]">
        <div className="flex flex-col items-end pr-[9px]">
          <div className="w-[59px] leading-4 font-bold whitespace-nowrap">C1:920000</div>
          <div className="w-[59px] leading-[18px]">REF</div>
        </div>
        <span className="absolute top-px right-0.5 bottom-0 w-0.5 bg-[#0ff]" />
        <svg className="absolute top-3 right-0" width="6" height="7" viewBox="0 0 6 7" aria-hidden="true">
          <path d="M0 3.500L3 0h3v7H3z" fill="#fff" />
          <path d="M1 3.500L3 1h3v5H3z" fill="#f0f" />
          <path d="M2 0h2v7H2z" fill="#0ff" />
        </svg>
      </div>
      <div className="h-1 shrink-0 border-t border-b border-t-[#c0c0c0] border-b-black bg-white shadow-[inset_0_-1px_#808080]" />
      <div className="flex min-h-0 flex-1">
        <div className="relative flex min-w-0 flex-1 flex-col overflow-hidden">
          <div ref={ref} className="h-5 shrink-0 overflow-hidden bg-[#a09fa4]">
            <Ruler width={w} height={20} />
          </div>
          <div className="relative min-h-0 flex-1 overflow-hidden">
            <svg width={w} height={27 + SIGNALS.length * 25} className="block" shapeRendering="crispEdges" aria-label="Signal traces">
              {SIGNALS.map((s, n) => (
                <Wave key={s.name} sig={s} top={28 + n * 25} width={w} />
              ))}
            </svg>
            <svg className="absolute top-[510px] left-[49.300%]" width="14" height="20" viewBox="0 0 14 20" fill="#000" stroke="#fff" aria-hidden="true">
              <path d="M1 1v16.500h8l4-4z" />
            </svg>
            <span className="absolute inset-y-0 right-0 w-px bg-[#0ff]" />
          </div>
          <div className="relative flex h-[23px] shrink-0 bg-[#a09fa4]">
            <span className="w-4 shrink-0 bg-[#606060]" />
            <span className="relative z-10 flex-1">
              <Ruler width={Math.max(w - 32, 0)} height={23} />
            </span>
            <span className="w-4 shrink-0 bg-[#606060]" />
            <span className="absolute inset-y-0 right-[15px] z-20 w-0.5 bg-[#0ff]" />
          </div>
          <div className={`relative flex h-4 shrink-0 justify-between ${DITHER}`}>
            <ScrollBtn dim label="Scroll waves left" />
            <ScrollBtn right dim label="Scroll waves right" />
            <span className="absolute right-3 bottom-0 whitespace-nowrap text-[#808080] [text-shadow:1px_1px_#e8e8e8]">CSDN @HFUT90S</span>
          </div>
          <div className="h-0.5 shrink-0 bg-[#c0c0c0]" />
        </div>
        <div className="flex w-[3px] shrink-0 flex-col">
          <span className="h-4 border-b border-l border-b-black border-l-white bg-[#c0c0c0]" />
          <span className={`flex-1 ${DITHER}`} />
          <span className="h-8 border-t border-white bg-[#c0c0c0]" />
        </div>
      </div>
    </section>
  );
}

export default function App() {
  return (
    <main className="flex h-screen flex-col overflow-hidden bg-[#c0c0c0] font-['Liberation_Sans',sans-serif] text-[12px] leading-4 text-black">
      <div className="h-0.5 shrink-0 bg-[#e4e4ec]" />
      <MenuBar />
      <ToolbarOne />
      <ToolbarTwo />
      <div className="h-px shrink-0" />
      <div className="h-[5px] shrink-0 bg-[#000080]" />
      <div className="flex min-h-0 flex-1 border-t border-[#c0c0c0]">
        <div className="flex min-w-0 flex-1 border-t border-[#808080]">
          <SignalPane />
          <div className="flex w-[10px] shrink-0">
            <span className="w-0.5 bg-[#e0e0e0]" />
            <span className="w-px bg-[#808080]" />
            <span className="w-px bg-white" />
            <span className="w-[3px]" />
            <span className="w-px bg-black" />
            <span className="w-px bg-[#808080]" />
            <span className="w-px bg-black" />
          </div>
          <WavePane />
        </div>
      </div>
      <footer className="flex h-1 shrink-0 border-t border-[#808080]">
        <span className="w-[86px] border-r border-[#404040]" />
      </footer>
    </main>
  );
}
